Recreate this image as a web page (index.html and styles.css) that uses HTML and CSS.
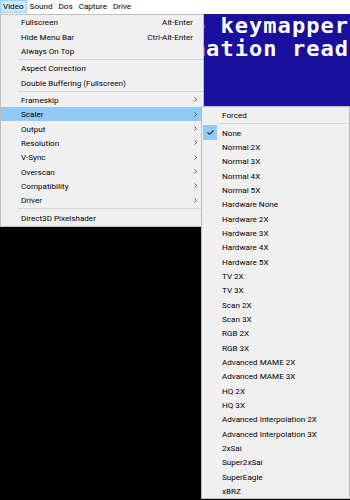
FILE: index.html
```html
<!DOCTYPE html>
<html lang="en">
<head>
    <meta charset="UTF-8">
    <meta name="viewport" content="width=device-width, initial-scale=1.0">
    <title>DOSBox - Video menu</title>
    <link rel="stylesheet" href="styles.css">
</head>
<body>
    <div class="menubar">
        <span class="menubar-item active">Video</span>
        <span class="menubar-item">Sound</span>
        <span class="menubar-item">Dos</span>
        <span class="menubar-item">Capture</span>
        <span class="menubar-item">Drive</span>
    </div>

    <div class="stage">
        <!-- emulated DOS screen, mostly hidden behind the open menu -->
        <div class="dos-screen">
            <div class="dos-banner">
                <div class="dos-line">To activate the keymapper ctrl-F1.</div>
                <div class="dos-line">For more information read the README file in the DOSBox directory.</div>
                <div class="dos-line"></div>
                <div class="dos-line"></div>
                <div class="dos-line"></div>
                <div class="dos-line"></div>
                <div class="dos-line"></div>
                <div class="dos-line"></div>
            </div>
        </div>

        <ul class="menu menu-video">
            <li class="menu-item"><span class="mark"></span><span class="label">Fullscreen</span><span class="key">Alt-Enter</span><span class="arrow"></span></li>
            <li class="menu-item"><span class="mark"></span><span class="label">Hide Menu Bar</span><span class="key">Ctrl-Alt-Enter</span><span class="arrow"></span></li>
            <li class="menu-item"><span class="mark"></span><span class="label">Always On Top</span><span class="arrow"></span></li>
            <li class="menu-sep"></li>
            <li class="menu-item"><span class="mark"></span><span class="label">Aspect Correction</span><span class="arrow"></span></li>
            <li class="menu-item"><span class="mark"></span><span class="label">Double Buffering (Fullscreen)</span><span class="arrow"></span></li>
            <li class="menu-sep"></li>
            <li class="menu-item"><span class="mark"></span><span class="label">Frameskip</span><span class="arrow"><svg width="3" height="5" viewBox="0 0 3 5"><polyline points="0.5,0.5 2.5,2.5 0.5,4.5"/></svg></span></li>
            <li class="menu-item highlight"><span class="mark"></span><span class="label">Scaler</span><span class="arrow"><svg width="3" height="5" viewBox="0 0 3 5"><polyline points="0.5,0.5 2.5,2.5 0.5,4.5"/></svg></span></li>
            <li class="menu-item"><span class="mark"></span><span class="label">Output</span><span class="arrow"><svg width="3" height="5" viewBox="0 0 3 5"><polyline points="0.5,0.5 2.5,2.5 0.5,4.5"/></svg></span></li>
            <li class="menu-item"><span class="mark"></span><span class="label">Resolution</span><span class="arrow"><svg width="3" height="5" viewBox="0 0 3 5"><polyline points="0.5,0.5 2.5,2.5 0.5,4.5"/></svg></span></li>
            <li class="menu-item"><span class="mark"></span><span class="label">V-Sync</span><span class="arrow"><svg width="3" height="5" viewBox="0 0 3 5"><polyline points="0.5,0.5 2.5,2.5 0.5,4.5"/></svg></span></li>
            <li class="menu-item"><span class="mark"></span><span class="label">Overscan</span><span class="arrow"><svg width="3" height="5" viewBox="0 0 3 5"><polyline points="0.5,0.5 2.5,2.5 0.5,4.5"/></svg></span></li>
            <li class="menu-item"><span class="mark"></span><span class="label">Compatibility</span><span class="arrow"><svg width="3" height="5" viewBox="0 0 3 5"><polyline points="0.5,0.5 2.5,2.5 0.5,4.5"/></svg></span></li>
            <li class="menu-item"><span class="mark"></span><span class="label">Driver</span><span class="arrow"><svg width="3" height="5" viewBox="0 0 3 5"><polyline points="0.5,0.5 2.5,2.5 0.5,4.5"/></svg></span></li>
            <li class="menu-sep"></li>
            <li class="menu-item"><span class="mark"></span><span class="label">Direct3D Pixelshader</span><span class="arrow"></span></li>
        </ul>

        <!-- submenu opened from "Scaler" -->
        <ul class="menu menu-scaler">
            <li class="menu-item"><span class="mark"></span><span class="label">Forced</span></li>
            <li class="menu-sep"></li>
            <li class="menu-item"><span class="mark"><span class="check-box"><svg width="7" height="5" viewBox="0 0 7 5"><polyline points="0.5,2.3 2.5,4.3 6.5,0.5"/></svg></span></span><span class="label">None</span></li>
            <li class="menu-item"><span class="mark"></span><span class="label">Normal 2X</span></li>
            <li class="menu-item"><span class="mark"></span><span class="label">Normal 3X</span></li>
            <li class="menu-item"><span class="mark"></span><span class="label">Normal 4X</span></li>
            <li class="menu-item"><span class="mark"></span><span class="label">Normal 5X</span></li>
            <li class="menu-item"><span class="mark"></span><span class="label">Hardware None</span></li>
            <li class="menu-item"><span class="mark"></span><span class="label">Hardware 2X</span></li>
            <li class="menu-item"><span class="mark"></span><span class="label">Hardware 3X</span></li>
            <li class="menu-item"><span class="mark"></span><span class="label">Hardware 4X</span></li>
            <li class="menu-item"><span class="mark"></span><span class="label">Hardware 5X</span></li>
            <li class="menu-item"><span class="mark"></span><span class="label">TV 2X</span></li>
            <li class="menu-item"><span class="mark"></span><span class="label">TV 3X</span></li>
            <li class="menu-item"><span class="mark"></span><span class="label">Scan 2X</span></li>
            <li class="menu-item"><span class="mark"></span><span class="label">Scan 3X</span></li>
            <li class="menu-item"><span class="mark"></span><span class="label">RGB 2X</span></li>
            <li class="menu-item"><span class="mark"></span><span class="label">RGB 3X</span></li>
            <li class="menu-item"><span class="mark"></span><span class="label">Advanced MAME 2X</span></li>
            <li class="menu-item"><span class="mark"></span><span class="label">Advanced MAME 3X</span></li>
            <li class="menu-item"><span class="mark"></span><span class="label">HQ 2X</span></li>
            <li class="menu-item"><span class="mark"></span><span class="label">HQ 3X</span></li>
            <li class="menu-item"><span class="mark"></span><span class="label">Advanced Interpolation 2X</span></li>
            <li class="menu-item"><span class="mark"></span><span class="label">Advanced Interpolation 3X</span></li>
            <li class="menu-item"><span class="mark"></span><span class="label">2xSai</span></li>
            <li class="menu-item"><span class="mark"></span><span class="label">Super2xSai</span></li>
            <li class="menu-item"><span class="mark"></span><span class="label">SuperEagle</span></li>
            <li class="menu-item"><span class="mark"></span><span class="label">xBRZ</span></li>
        </ul>
    </div>
</body>
</html>
```

FILE: styles.css
```css
* {
    box-sizing: border-box;
}

body {
    margin: 0;
    width: 350px;
    height: 500px;
    overflow: hidden;
    background-color: #000;
    font-family: Roboto, "Noto Sans", sans-serif;
    font-size: 8.1px;
    color: #000;
}

/* top menu bar */
.menubar {
    display: flex;
    height: 14px;
    background-color: #fff;
}

.menubar-item {
    height: 13px;
    padding: 0 2px;
    line-height: 11px;
    border: 1px solid transparent;
}

.menubar-item.active {
    background-color: #cce8ff;
    border-color: #99d1ff;
}

/* DOS screen */
.stage {
    position: relative;
    height: 486px;
}

.dos-screen {
    height: 100%;
    overflow: hidden;
    background-color: #000;
    color: #fff;
    font-family: "DejaVu Sans Mono", monospace;
    font-weight: bold;
    font-size: 22px;
    line-height: 23.4px;
    letter-spacing: 1.06px;
}

.dos-banner {
    background-color: #1a10a0;
}

.dos-line {
    height: 23.4px;
    margin-left: -8.5px;
    white-space: pre;
}

/* dropdown menus */
.menu {
    position: absolute;
    margin: 0;
    padding: 0 0 1px;
    list-style: none;
    background-color: #f0f0f0;
    border: 1px solid #bdbdbd;
}

.menu-video {
    top: 0;
    left: 0;
    width: 204px;
}

.menu-scaler {
    top: 92px;
    left: 201px;
    width: 149px;
    padding: 1px 0 0;
}

.menu-item {
    display: flex;
    align-items: center;
    height: 14.35px;
    padding-right: 6px;
    white-space: nowrap;
}

.menu-item.highlight {
    background-color: #91c9f7;
}

.mark {
    flex: none;
    align-self: stretch;
    width: 20px;
    display: flex;
}

.check-box {
    width: 14px;
    margin-left: 1px;
    display: flex;
    align-items: center;
    justify-content: center;
    background-color: #91c9f7;
}

.check-box polyline {
    fill: none;
    stroke: #2b2b2b;
    stroke-width: 1.1;
}

.label {
    flex: 1;
}

.key {
    margin-right: 1px;
}

.arrow {
    flex: none;
    width: 3px;
    display: flex;
}

.arrow polyline {
    fill: none;
    stroke: #555;
    stroke-width: 1;
}

.menu-sep {
    height: 1px;
    margin: 1px 0 1px 17px;
    background-color: #d7d7d7;
}
```
